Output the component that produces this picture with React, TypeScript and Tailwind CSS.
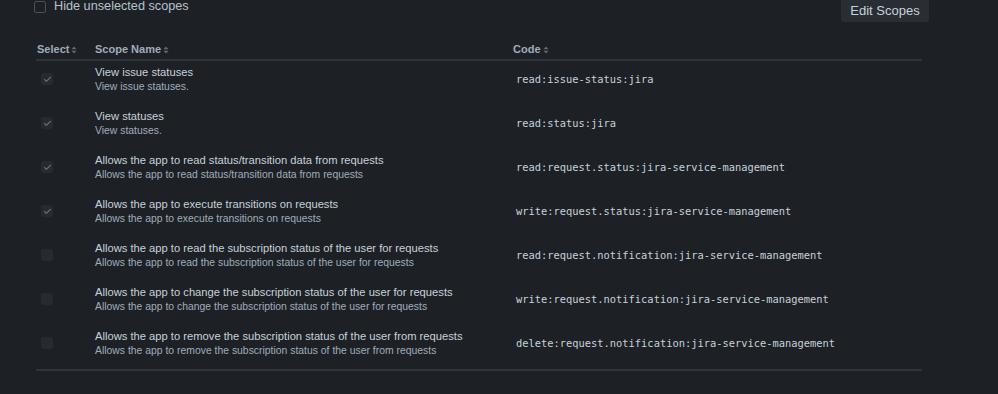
import { Check } from "lucide-react";

const scopes = [
  { name: "View issue statuses", desc: "View issue statuses.", code: "read:issue-status:jira", on: true },
  { name: "View statuses", desc: "View statuses.", code: "read:status:jira", on: true },
  {
    name: "Allows the app to read status/transition data from requests",
    desc: "Allows the app to read status/transition data from requests",
    code: "read:request.status:jira-service-management",
    on: true,
  },
  {
    name: "Allows the app to execute transitions on requests",
    desc: "Allows the app to execute transitions on requests",
    code: "write:request.status:jira-service-management",
    on: true,
  },
  {
    name: "Allows the app to read the subscription status of the user for requests",
    desc: "Allows the app to read the subscription status of the user for requests",
    code: "read:request.notification:jira-service-management",
    on: false,
  },
  {
    name: "Allows the app to change the subscription status of the user for requests",
    desc: "Allows the app to change the subscription status of the user for requests",
    code: "write:request.notification:jira-service-management",
    on: false,
  },
  {
    name: "Allows the app to remove the subscription status of the user from requests",
    desc: "Allows the app to remove the subscription status of the user from requests",
    code: "delete:request.notification:jira-service-management",
    on: false,
  },
];

function SortIcon() {
  return (
    <svg width="6" height="8" viewBox="0 0 6 8" className="ml-[2px]">
      <path d="M3 0.5 L5.5 3.2 H0.5 Z" fill="#5f6b78" />
      <path d="M3 7.5 L5.5 4.8 H0.5 Z" fill="#5f6b78" />
    </svg>
  );
}

function Box({ on }: { on: boolean }) {
  return (
    <div className="w-[12px] h-[12px] rounded-[3px] bg-[#262b31] flex items-center justify-center">
      {on && <Check size={9} strokeWidth={3} color="#656e78" />}
    </div>
  );
}

export default function App() {
  return (
    <div
      className="w-[998px] h-[394px] overflow-hidden bg-[#1d2125] text-[#b6c2cf]"
      style={{ fontFamily: "'Liberation Sans', Arial, sans-serif" }}
    >
      <div className="flex items-start justify-between pl-[34px] pr-[69px] -mt-[9px]">
        <label className="flex items-center gap-[8px] pt-[8px]">
          <span className="w-[12px] h-[12px] rounded-[2px] border-[1.5px] border-[#4a525b]" />
          <span className="text-[12.7px] leading-[15px] text-[#b6c2cf]">Hide unselected scopes</span>
        </label>
        <button className="h-[31px] w-[88px] rounded-[3px] bg-[#282e33] text-[13px] text-[#c7d1db] pt-[8px]">
          Edit Scopes
        </button>
      </div>

      <div className="ml-[36px] w-[886px] mt-[18px]">
        <div className="flex items-center h-[21px] border-b-2 border-[#2e353c] text-[11px] font-bold text-[#9fadbc]">
          <div className="w-[59px] pl-[1px] flex items-center">
            Select
            <SortIcon />
          </div>
          <div className="w-[417px] flex items-center">
            Scope Name
            <SortIcon />
          </div>
          <div className="flex items-center pl-[1px]">
            Code
            <SortIcon />
          </div>
        </div>

        {scopes.map((s) => (
          <div key={s.code} className="flex items-start h-[44px] pt-[3px]">
            <div className="w-[59px] pl-[5px] pt-[9px]">
              <Box on={s.on} />
            </div>
            <div className="w-[417px]">
              <div className="text-[11.2px] leading-[16px] text-[#c7d1db]">{s.name}</div>
              <div className="text-[10.4px] leading-[13px] text-[#9fadbc]">{s.desc}</div>
            </div>
            <div
              className="pl-[4px] pt-[8px] text-[10.4px] text-[#c7d1db]"
              style={{ fontFamily: "'DejaVu Sans Mono', monospace" }}
            >
              {s.code}
            </div>
          </div>
        ))}
        <div className="border-b-2 border-[#2e353c]" />
      </div>
    </div>
  );
}
